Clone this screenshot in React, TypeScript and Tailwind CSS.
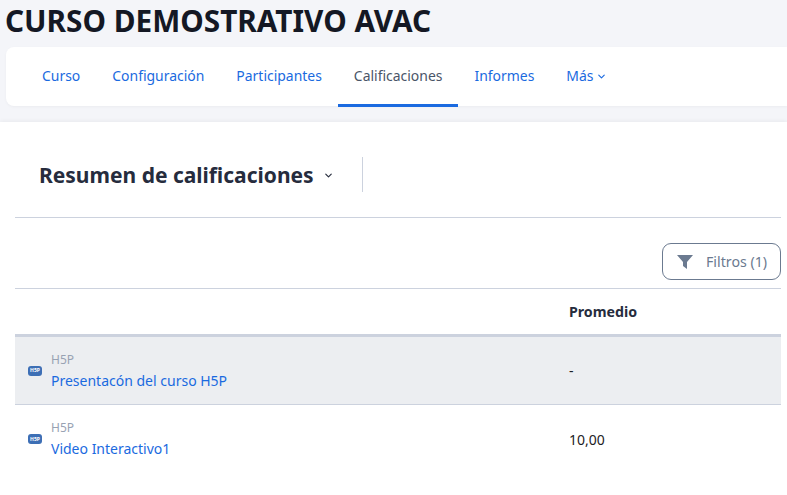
import { ChevronDown } from "lucide-react";

const tabs = ["Curso", "Configuración", "Participantes", "Calificaciones", "Informes"];

function H5pIcon() {
    return (
        <div className="flex h-[10px] w-[14px] items-center justify-center rounded-[3px] bg-[#3d6fb5] text-[5px] leading-none font-bold text-white">
            H5P
        </div>
    );
}

function Row({ title, value, shaded }: { title: string; value: string; shaded?: boolean }) {
    return (
        <div className={`flex h-[68px] items-center ${shaded ? "border-b border-[#ccd2de] bg-[#eceef1]" : "bg-white"}`}>
            <div className="flex w-[554px] items-center pl-[13px]">
                <H5pIcon />
                <div className="ml-[9px] pt-[2px]">
                    <div className="text-[12px] leading-[16px] text-[#98a2b3]">H5P</div>
                    <div className="mt-[2px] text-[14px] leading-[22px] text-[#1a6ae0]">{title}</div>
                </div>
            </div>
            <div className="text-[14px] text-[#1d2125]">{value}</div>
        </div>
    );
}

export default function App() {
    return (
        <div className="h-[495px] w-[787px] overflow-hidden bg-[#f4f5f9] font-['Noto_Sans',sans-serif]">
            <h1 className="h-[47px] pl-[5px] text-[29.75px] leading-[41px] font-bold text-[#141824]">CURSO DEMOSTRATIVO AVAC</h1>

            <div className="ml-[6px] flex h-[59px] rounded-l-[8px] bg-white pl-[20px] shadow-[0_1px_3px_rgba(0,0,0,0.04)]">
                {tabs.map((t) => (
                    <div
                        key={t}
                        className={`flex h-[60px] items-center border-b-[3px] px-[16px] pt-[2px] text-[13.95px] ${t === "Calificaciones" ? "border-[#1a6ae0] text-[#4a5568]" : "border-transparent text-[#1a6ae0]"}`}
                    >
                        {t}
                    </div>
                ))}
                <div className="flex h-[60px] items-center border-b-[3px] border-transparent px-[16px] pt-[2px] text-[13.95px] text-[#1a6ae0]">
                    Más
                    <ChevronDown size={11} strokeWidth={2.5} className="ml-[3px]" />
                </div>
            </div>

            <div className="mt-[16px] h-[373px] bg-white px-[15px] pr-[6px] shadow-[0_-1px_4px_rgba(0,0,0,0.05)]">
                <div className="flex h-[96px] items-start border-b border-[#ccd2de] pt-[35px]">
                    <div className="flex h-[35px] w-[348px] items-center border-r border-[#ccd2de] pl-[24px]">
                        <span className="translate-y-[1px] text-[21px] leading-none font-bold text-[#262c3d]">Resumen de calificaciones</span>
                        <ChevronDown size={11} strokeWidth={2.5} className="ml-[9px] translate-y-[1px] text-[#262c3d]" />
                    </div>
                </div>

                <div className="flex h-[71px] items-start justify-end border-b border-[#ccd2de] pt-[25px]">
                    <button className="flex h-[37px] w-[119px] items-center rounded-[9px] border border-[#6b7a90] pl-[14px] text-[14.2px] text-[#6b7a90]">
                        <svg width="16" height="14" viewBox="0 0 16 14" className="mr-[13px]" fill="#6b7a90">
                            <path d="M0 0h16L10 7v7L6 11V7z" />
                        </svg>
                        Filtros (1)
                    </button>
                </div>

                <div className="flex h-[48px] items-center border-b-[3px] border-[#ccd2de]">
                    <div className="w-[554px]" />
                    <div className="text-[14.2px] font-bold text-[#262c3d]">Promedio</div>
                </div>

                <Row title="Presentacón del curso H5P" value="-" shaded />
                <Row title="Video Interactivo1" value="10,00" />
            </div>
        </div>
    );
}
